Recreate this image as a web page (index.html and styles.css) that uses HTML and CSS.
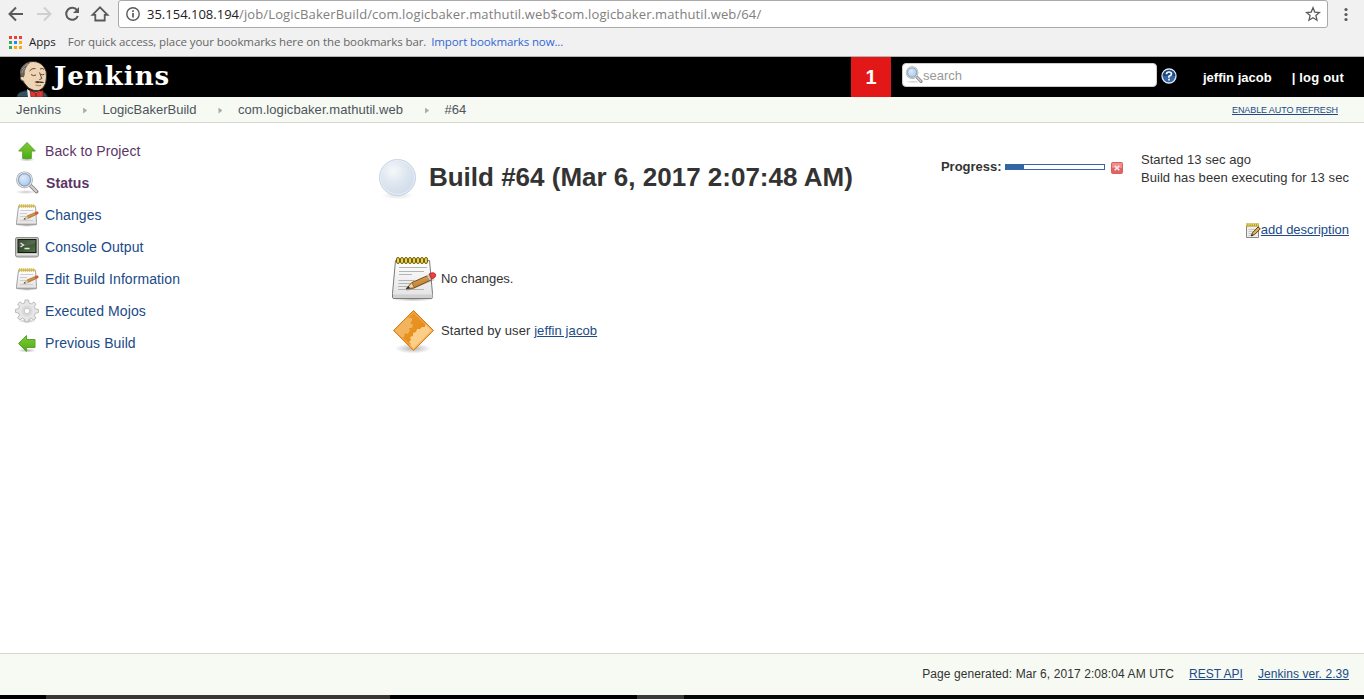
FILE: index.html
```html
<!DOCTYPE html>
<html lang="en">
<head>
<meta charset="utf-8">
<title>LogicBakerBuild #64 [Jenkins]</title>
<link rel="stylesheet" href="styles.css">
</head>
<body>
<svg class="defs" width="0" height="0" aria-hidden="true">
  <defs>
    <linearGradient id="green" x1="0" y1="0" x2="0" y2="1"><stop offset="0" stop-color="#7cc63c"/><stop offset=".5" stop-color="#68bd27"/><stop offset="1" stop-color="#4bab12"/></linearGradient>
    <linearGradient id="paper" x1="0" y1="0" x2="0" y2="1"><stop offset="0" stop-color="#ffffff"/><stop offset="1" stop-color="#e2e2e2"/></linearGradient>
    <linearGradient id="wood" x1="0" y1="0" x2=".5" y2="1"><stop offset="0" stop-color="#e8b56a"/><stop offset="1" stop-color="#b87b2c"/></linearGradient>
    <radialGradient id="lens" cx=".4" cy=".35" r=".7"><stop offset="0" stop-color="#dceafa"/><stop offset="1" stop-color="#a4c4ea"/></radialGradient>
    <radialGradient id="ball" cx=".38" cy=".32" r=".7"><stop offset="0" stop-color="#f4f8fa"/><stop offset=".5" stop-color="#dfe7f0"/><stop offset="1" stop-color="#d0dcea"/></radialGradient>
    <radialGradient id="shade"><stop offset="0" stop-color="#000" stop-opacity=".3"/><stop offset="1" stop-color="#000" stop-opacity="0"/></radialGradient>
    <linearGradient id="screen" x1="0" y1="0" x2="1" y2="1"><stop offset="0" stop-color="#24331f"/><stop offset="1" stop-color="#58744b"/></linearGradient>
    <linearGradient id="orange" x1="0" y1="0" x2="1" y2="1"><stop offset="0" stop-color="#e99a2e"/><stop offset="1" stop-color="#e48714"/></linearGradient>
    <clipPath id="diamond"><path d="M24.500 5.500L43.500 24.500 24.500 43.500 5.500 24.500z"/></clipPath>
  </defs>
  <symbol id="notepad" viewBox="0 0 48 48">
    <ellipse cx="24" cy="45" rx="22" ry="2.500" fill="url(#shade)"/>
    <path d="M6.500 6.500h34l3 33v3.500q0 1.500-1.500 1.500H5q-1.500 0-1.500-1.500V39.500z" fill="url(#paper)" stroke="#7b7b78"/>
    <path d="M4 40.500h39.500v2q0 1.500-1.500 1.500H5.500Q4 44 4 42.500z" fill="#d0d0d0"/>
    <path d="M10 13.500h28M10 17.500h25M10 20.500h13M9.500 26.500h16M9.500 29.500h12M9 32.500h10M9 35.500h26" stroke="#b4b4b4"/>
    <g fill="#e9d250" stroke="#75620b">
      <rect x="7.500" y="3.500" width="3" height="6" rx="1.500"/><rect x="11.500" y="3.500" width="3" height="6" rx="1.500"/><rect x="15.500" y="3.500" width="3" height="6" rx="1.500"/><rect x="19.500" y="3.500" width="3" height="6" rx="1.500"/><rect x="23.500" y="3.500" width="3" height="6" rx="1.500"/><rect x="27.500" y="3.500" width="3" height="6" rx="1.500"/><rect x="31.500" y="3.500" width="3" height="6" rx="1.500"/><rect x="35.500" y="3.500" width="3" height="6" rx="1.500"/>
    </g>
    <path d="M17 35.500l28-11" stroke="#000" stroke-opacity=".15" stroke-width="4"/>
    <path d="M17.500 34.500l5.500-6 17-7.500 2 5-17 8z" fill="url(#wood)" stroke="#70400d" stroke-width=".9"/>
    <path d="M17.500 34.500l5.300-5.800 2.500 5z" fill="#f2d7a6" stroke="#70400d" stroke-width=".6"/>
    <path d="M17 35l2.700-3 1 2z" fill="#222"/>
    <path d="M38.800 20.800l2.600 5" stroke="#c4c4c4" stroke-width="2"/>
    <path d="M40.300 19.700l3-1q2.500-.3 3.200 1.500t-.8 3.300l-3 1.500z" fill="#ee3f3b" stroke="#b01d1d" stroke-width=".8"/>
  </symbol>
  <symbol id="smallpad" viewBox="0 0 24 24">
    <ellipse cx="12" cy="22.500" rx="11.500" ry="1.300" fill="url(#shade)"/>
    <path d="M3.500 3.500h17l1 16v2h-20v-2z" fill="url(#paper)" stroke="#a2a2a0"/>
    <path d="M2 20.500h19" stroke="#cfcfcf"/>
    <path d="M4.500 1.500v3M6.500 1.500v3M8.500 1.500v3M10.500 1.500v3M12.500 1.500v3M14.500 1.500v3M16.500 1.500v3M18.500 1.500v3" stroke="#b89b27" stroke-width="1.300"/>
    <path d="M3.500 3h17" stroke="#dcc860" stroke-width="1.400"/>
    <path d="M5.500 7.500h13M5 10.500h7M5 13.500h6M5 17.500h13" stroke="#cdcdcd"/>
    <path d="M9 16.300l3-3.300 7.500-3.300 1.200 2.200-8 3.700z" fill="url(#wood)" stroke="#94601f" stroke-width=".6"/>
    <path d="M9 16.300l3-3.300 1.100 2.500z" fill="#f2d7a6"/>
    <path d="M8.500 16.500l1.500-1.400.5 1z" fill="#222"/>
    <path d="M20 9.400l1.600-.7q1.300-.1 1.600.8t-.5 1.500l-1.500.7z" fill="#e95532" stroke="#cf3a22" stroke-width=".5"/>
  </symbol>
  <symbol id="magnifier" viewBox="0 0 24 24">
    <ellipse cx="11" cy="21" rx="11" ry="2" fill="url(#shade)" opacity=".7"/>
    <path d="M16 15l5.500 5.500" stroke="#7d7d7d" stroke-width="3.800" stroke-linecap="round"/>
    <path d="M16 15l5.300 5.300" stroke="#cfcfcf" stroke-width="2.200" stroke-linecap="round"/>
    <circle cx="9.500" cy="8.800" r="7.300" fill="url(#lens)" stroke="#a3a3a3" stroke-width="2.200"/>
    <circle cx="9.500" cy="8.800" r="7.200" fill="none" stroke="#e3e3e3" stroke-width="1.100"/>
    <circle cx="9.500" cy="8.800" r="6" fill="none" stroke="#7298c8" stroke-width=".8"/>
  </symbol>
</svg>

<div class="toolbar">
  <svg class="nav-icons" width="118" height="28" viewBox="0 0 118 28" fill="none" stroke="#5a5a5a" stroke-width="2">
    <path d="M23 14H10.500M16 7.500L9.500 14l6.500 6.500"/>
    <path d="M37 14h12.500M44 7.500l6.500 6.500-6.500 6.500" stroke="#cfcfcf"/>
    <path d="M77 10.200A6 6 0 1 0 77.800 16"/><path d="M79 7v6h-6z" fill="#5a5a5a" stroke="none"/>
    <path d="M92.500 14.800L100 7.300l7.500 7.500h-2.800v5.700h-9.400v-5.700z" stroke-width="1.800"/>
  </svg>
  <div class="omnibox">
    <svg width="16" height="16" viewBox="0 0 16 16"><circle cx="8" cy="8" r="6.200" fill="none" stroke="#5a5a5a" stroke-width="1.400"/><path d="M8 7v4.500M8 4.200v1.700" stroke="#5a5a5a" stroke-width="1.700"/></svg>
    <span class="url"><span class="host">35.154.108.194</span><span class="path">/job/LogicBakerBuild/com.logicbaker.mathutil.web$com.logicbaker.mathutil.web/64/</span></span>
    <svg class="star" width="16" height="16" viewBox="0 0 16 16"><path d="M8 1.700l1.800 4.400 4.700.4-3.600 3.100 1.100 4.600L8 11.800l-4 2.400 1.100-4.600L1.500 6.500l4.700-.4z" fill="none" stroke="#5a5a5a" stroke-width="1.300"/></svg>
  </div>
  <svg class="kebab" width="8" height="28" viewBox="0 0 8 28" fill="#5a5a5a"><circle cx="4" cy="9.500" r="1.600"/><circle cx="4" cy="14.500" r="1.600"/><circle cx="4" cy="19.500" r="1.600"/></svg>
</div>
<div class="bookmarks">
  <svg width="13" height="13" viewBox="0 0 13 13"><path fill="#ea4335" d="M0 0h3v3H0zM5 0h3v3H5zM10 0h3v3h-3z"/><path fill="#34a853" d="M0 5h3v3H0zM0 10h3v3H0z"/><path fill="#1a8cff" d="M5 5h3v3H5z"/><path fill="#f9ab0b" d="M10 5h3v3h-3zM5 10h3v3H5zM10 10h3v3h-3z"/></svg>
  <span class="apps">Apps</span>
  <span class="hint">For quick access, place your bookmarks here on the bookmarks bar.</span>
  <span class="import">Import bookmarks now...</span>
</div>

<header class="header">
  <svg class="butler" width="34" height="37" viewBox="0 0 34 37">
    <path d="M1 37q0-4 5-5.500l7-1.500 14 2q4 1 4.500 5z" fill="#33505f" stroke="#16242c" stroke-width=".8"/>
    <path d="M11 29l6 4 8-2 2 6H12z" fill="#f2f0ea"/>
    <path d="M6 20Q3 12 6 7q4-5.500 11-5.500 7 0 11 5.500 3 4 2.500 10 0 7-3.500 11-4 4-9 2.500-6-1.500-9-6.500z" fill="#f0d5b5" stroke="#2b2521" stroke-width=".9"/>
    <path d="M6 18Q2.500 12 5.500 7.500 9 3 15 2q-4 3-5 6-2 3-1.200 6.500L7.500 18z" fill="#6b635e"/>
    <path d="M6 9q3-4 6-5M5.800 13q1-3 3-5" stroke="#aaa39d" stroke-width=".8" fill="none"/>
    <path d="M7.500 16.500q-3.500-1-3.300 1.500t4 3.500" fill="#f0d5b5" stroke="#40342c" stroke-width=".8"/>
    <path d="M13.500 11q2-3 6-2.500M24 9q2.500-1.500 4 .5M15 14.500q2.500 2 5 .5M24.500 14q2 1.500 3.800.3M23.500 12.500l2.300 6-2.500 1.200" fill="none" stroke="#4a3a30" stroke-width=".9"/>
    <path d="M18.500 22q3-1.500 5-.5 3-.5 5 1-3 1-5 .3-2.500 1-5-.8z" fill="#4d3b31"/>
    <path d="M19.500 25q3 1.500 5.500.3" fill="none" stroke="#8a6450" stroke-width=".8"/>
    <path d="M14 30.500l6 2.500v3.500l-5 .5zM20 33l7-2.500v6.500l-7-.5z" fill="#dc3730" stroke="#8b1a18" stroke-width=".7"/>
  </svg>
  <span class="brand">Jenkins</span>
  <span class="alert-count">1</span>
  <div class="search">
    <svg width="18" height="18"><use href="#magnifier"/></svg>
    <span>search</span>
  </div>
  <svg class="help" width="16" height="16" viewBox="0 0 16 16"><circle cx="8" cy="8" r="7" fill="#3465a4" stroke="#dce8f5" stroke-width="1.300"/><path d="M1.800 8a6.200 6.200 0 0 1 12.400 0z" fill="#1d4582"/><path d="M5.500 6.300Q5.500 4 8 4t2.500 2.100Q10.500 7.300 8 8.300v1.400M8 10.800v1.800" fill="none" stroke="#fff" stroke-width="1.700"/></svg>
  <span class="user">jeffin jacob</span>
  <span class="logout">| log out</span>
</header>

<nav class="crumbs">
  <span class="c1">Jenkins</span><i></i><span class="c2">LogicBakerBuild</span><i></i><span class="c3">com.logicbaker.mathutil.web</span><i></i><span>#64</span>
  <a class="refresh">ENABLE AUTO REFRESH</a>
</nav>

<div class="page">
  <aside class="side">
    <div class="task visited"><svg width="24" height="24" viewBox="0 0 24 24"><ellipse cx="12" cy="20.500" rx="8" ry="2" fill="url(#shade)"/><path d="M12 3.500l8.300 8.500h-4v7.500H7.700V12h-4z" fill="url(#green)" stroke="#58a52a" stroke-linejoin="round"/></svg><span>Back to Project</span></div>
    <div class="task visited current"><svg width="24" height="24"><use href="#magnifier"/></svg><span>Status</span></div>
    <div class="task"><svg width="24" height="24"><use href="#smallpad"/></svg><span>Changes</span></div>
    <div class="task"><svg width="24" height="24" viewBox="0 0 24 24"><path d="M2 2.500h20q1.500 0 1.500 1.500v16q0 2-2 2h-19q-2 0-2-2V4q0-1.500 1.500-1.500z" fill="#c0c1bd" stroke="#8e908a"/><path d="M1.500 19.500h21" stroke="#e4e4e4" stroke-width="1.500"/><rect x="3" y="4.500" width="18" height="13" fill="url(#screen)" stroke="#111b0e"/><path d="M3.500 12q9-.5 17-4V5h-17z" fill="#fff" fill-opacity=".12"/><path d="M5.500 8l3 2-3 2M9.500 13.500h5" fill="none" stroke="#e1ecd9" stroke-width="1.300"/></svg><span>Console Output</span></div>
    <div class="task"><svg width="24" height="24"><use href="#smallpad"/></svg><span>Edit Build Information</span></div>
    <div class="task"><svg width="24" height="24" viewBox="0 0 24 24"><ellipse cx="12" cy="22" rx="9" ry="2" fill="url(#shade)"/><path d="M10 1h3.500l.5 3 2.300.9L19 3l2 2.200-1.700 2.500.9 2.200 3.300.6v3l-3.100.7-1 2.300L21 19l-2.200 2.200-2.500-1.800-2.300.9-.6 2.700h-3.200l-.7-2.800-2.200-1L4.800 21l-2.200-2.200 1.800-2.500-.9-2.300-3-.6v-3l3-.6.9-2.200L2.700 5 5 2.800l2.400 1.800L9.500 4z" fill="#e6e6e6" stroke="#b4b4b4" stroke-width=".9"/><circle cx="12" cy="12" r="5.500" fill="#dadada"/><circle cx="12" cy="12" r="2.800" fill="#fff" stroke="#bdbdbd" stroke-width=".8"/></svg><span>Executed Mojos</span></div>
    <div class="task"><svg width="24" height="24" viewBox="0 0 24 24"><ellipse cx="12" cy="19.500" rx="9" ry="2" fill="url(#shade)"/><path d="M3.500 12.500l8-8v4h8.500v8h-8.500v4z" fill="url(#green)" stroke="#58a52a" stroke-linejoin="round"/></svg><span>Previous Build</span></div>
  </aside>

  <main class="main">
    <div class="build-head">
      <svg width="48" height="48" viewBox="0 0 48 48"><ellipse cx="24.500" cy="41.500" rx="16" ry="4" fill="url(#shade)" opacity=".4"/><circle cx="24.500" cy="23.500" r="18" fill="url(#ball)" stroke="#c8d5e7"/><circle cx="24.500" cy="23.500" r="16.800" fill="none" stroke="#e9eff7"/></svg>
      <h1>Build #64 (Mar 6, 2017 2:07:48 AM)</h1>
      <div class="progress">
        <b>Progress:</b>
        <span class="bar"><span class="fill"></span></span>
        <svg width="12" height="12" viewBox="0 0 12 12"><rect x=".5" y=".5" width="11" height="11" rx="1" fill="#df6565" stroke="#d96060"/><path d="M1 1h10v5H1z" fill="#f0a5a5" opacity=".65"/><path d="M3.700 3.700l4.600 4.600M8.300 3.700L3.700 8.300" stroke="#fbeaea" stroke-width="1.600"/></svg>
      </div>
      <div class="timing"><div class="t1">Started 13 sec ago</div><div class="t2">Build has been executing for 13 sec</div></div>
    </div>
    <div class="describe">
      <svg width="16" height="16" viewBox="0 0 16 16"><path d="M1.500 3.500h12v12h-12z" fill="#eee" stroke="#888"/><path d="M1 3h13" stroke="#a48a20" stroke-width="3"/><path d="M1 2.700h13" stroke="#f1d855" stroke-width="2" stroke-dasharray="1.500 .7"/><path d="M3.500 7.500h7M3.500 9.500h5M3.500 11.500h3M3.500 13.500h3" stroke="#c4c4c4"/><path d="M6.500 13.800l1-3L13 5l2.300 1.800L9.700 12.500z" fill="#e3ae58" stroke="#53401c"/><path d="M6 14.300l.7-2 1.300 1z" fill="#111"/></svg><a>add description</a>
    </div>
    <div class="fact"><svg width="48" height="48"><use href="#notepad"/></svg><span class="f1">No changes.</span></div>
    <div class="fact">
      <svg width="48" height="48" viewBox="0 0 48 48"><ellipse cx="24" cy="42.500" rx="18" ry="5" fill="url(#shade)"/><path d="M24.500 4.500L44.500 24.500 24.500 44.500 4.500 24.500z" fill="url(#orange)" stroke="#e07c14" stroke-linejoin="round"/><g clip-path="url(#diamond)" fill="#fac982"><path d="M0 10l18 0 1 2 4 0 0 3-2 2 3 2-1 3-3 0 1 3-3 3-2-1-1 4-3 0-1-2-2 3-3-1 0 12H0z" opacity=".6"/><path d="M46 20l-7-1-1-1-2 1 0 2-3 0-2 2-3 0-1 3-3 1 0 3-3 1 1 3-2 2 2 2-2 2 2 3v5h25z" fill="#fdce88"/></g><path d="M24.500 6.300L42.700 24.500 24.500 42.700 6.300 24.500z" fill="none" stroke="#f6b35c" stroke-width=".9"/></svg>
      <span class="f2">Started by user <a>jeffin jacob</a></span>
    </div>
  </main>
</div>

<footer class="footer"><span class="g1">Page generated: Mar 6, 2017 2:08:04 AM UTC</span><a class="g2">REST API</a><a class="g3">Jenkins ver. 2.39</a></footer>
<div class="taskbar"></div>
</body>
</html>
```

FILE: styles.css
```css
* { box-sizing: border-box; }
body {
  margin: 0;
  width: 1364px;
  height: 699px;
  overflow: hidden;
  display: flex;
  flex-direction: column;
  background: #fff;
  color: #333;
  font: 13px/18px "Liberation Sans", Arial, sans-serif;
  white-space: nowrap;
}
svg { display: block; flex: none; }
span, a { flex: none; }
.defs { position: absolute; }

.toolbar, .bookmarks {
  display: flex;
  flex: none;
  align-items: center;
  height: 28px;
  background: #f1f1f1;
  font-family: "Open Sans", "Noto Sans", sans-serif;
}
.omnibox {
  display: flex;
  align-items: center;
  width: 1210px;
  height: 28px;
  padding: 0 6px;
  background: #fff;
  border: 1px solid #a9a9a9;
  border-radius: 3px;
}
.url { margin-left: 6px; font-size: 13px; }
.host { color: #222; }
.path { color: #808080; letter-spacing: .125px; }
.star { margin-left: auto; }
.kebab { margin-left: 14px; }
.bookmarks {
  height: 29px;
  padding-left: 9px;
  border-bottom: 1px solid #b0b4b4;
  font-size: 11.5px;
}
.apps { margin-left: 7px; color: #222; }
.hint { margin-left: 12px; color: #666; letter-spacing: -.09px; }
.import { margin-left: 5px; color: #3367d6; letter-spacing: -.12px; }

.header {
  display: flex;
  flex: none;
  align-items: center;
  height: 40px;
  padding-left: 16px;
  background: #000;
  color: #fff;
  font-weight: bold;
}
.butler { align-self: flex-end; }
.brand {
  width: 797px;
  margin: -3px 0 0 4px;
  font: bold 26px/36px "DejaVu Serif", serif;
  letter-spacing: 1px;
}
.alert-count {
  width: 40px;
  background: #e21717;
  font-size: 20px;
  line-height: 40px;
  text-align: center;
}
.search {
  display: flex;
  align-items: center;
  width: 255px;
  height: 24px;
  margin: -4px 4px 0 11px;
  padding-left: 2px;
  background: #fff;
  border: 1px solid #ccc;
  border-radius: 4px;
  color: #999;
  font-weight: normal;
}
.search span { padding-top: 2px; }
.help { margin-top: -2px; }
.user { margin: 2px 0 0 26px; }
.logout { margin: 2px 0 0 20px; letter-spacing: .2px; }

.crumbs {
  display: flex;
  flex: none;
  align-items: center;
  height: 26px;
  padding: 0 26px 0 16px;
  background: #f6faf2;
  border-bottom: 1px solid #d3d7cf;
  color: #4d545d;
}
.crumbs i {
  width: 4px;
  height: 6px;
  margin: 2px 15.4px 0 22px;
  background: #aaa;
  clip-path: polygon(0 0, 100% 50%, 0 100%);
}
.c1 { letter-spacing: .15px; }
.c3 { letter-spacing: .07px; }
a { color: #204a87; text-decoration: underline; }
.refresh { margin-left: auto; font-size: 9px; letter-spacing: -.1px; }

.page { display: flex; flex: 1; }
.side { width: 373px; padding: 12px 0 0 15px; }
.task {
  display: flex;
  align-items: center;
  gap: 6px;
  height: 32px;
  color: #204a87;
  font-size: 14px;
  letter-spacing: .09px;
}
.visited { color: #5c3566; }
.current { gap: 7px; font-weight: bold; }

.main { flex: 1; padding: 27px 15px 0 0; }
.build-head { display: flex; height: 72px; padding-top: 4px; }
h1 { width: 512px; margin: 5px 0 0 8px; font-size: 26px; line-height: 36px; }
.progress { display: flex; align-items: center; width: 200px; height: 26px; }
.bar {
  width: 100px;
  height: 6px;
  margin: 0 6px 0 3px;
  border: 1px solid #3465a4;
}
.fill { display: block; width: 18px; height: 4px; background: #3465a4; }
.progress svg { margin-top: 2px; }
.timing { margin-top: -3px; letter-spacing: .06px; }
.describe { display: flex; align-items: center; justify-content: flex-end; height: 18px; margin-top: -1px; }
.fact { display: flex; align-items: center; gap: 4px; height: 52px; margin-left: 16px; }
.fact span { padding-top: 2px; }
.f1 { letter-spacing: -.05px; }
.f2 { letter-spacing: .09px; }
.describe + .fact { margin-top: 13px; }

.footer {
  display: flex;
  flex: none;
  align-items: center;
  justify-content: flex-end;
  gap: 15px;
  height: 42px;
  padding: 0 15px 2px 0;
  background: #f6faf2;
  border-top: 1px solid #d3d7cf;
  font-size: 12px;
}
.g1 { letter-spacing: .09px; }
.g3 { letter-spacing: .06px; }
.taskbar {
  flex: none;
  height: 4px;
  background: linear-gradient(90deg, #000 46px, #3a3634 46px 390px, #000 390px 637px, #3a3a3a 637px 684px, #05090a 684px);
}
```
